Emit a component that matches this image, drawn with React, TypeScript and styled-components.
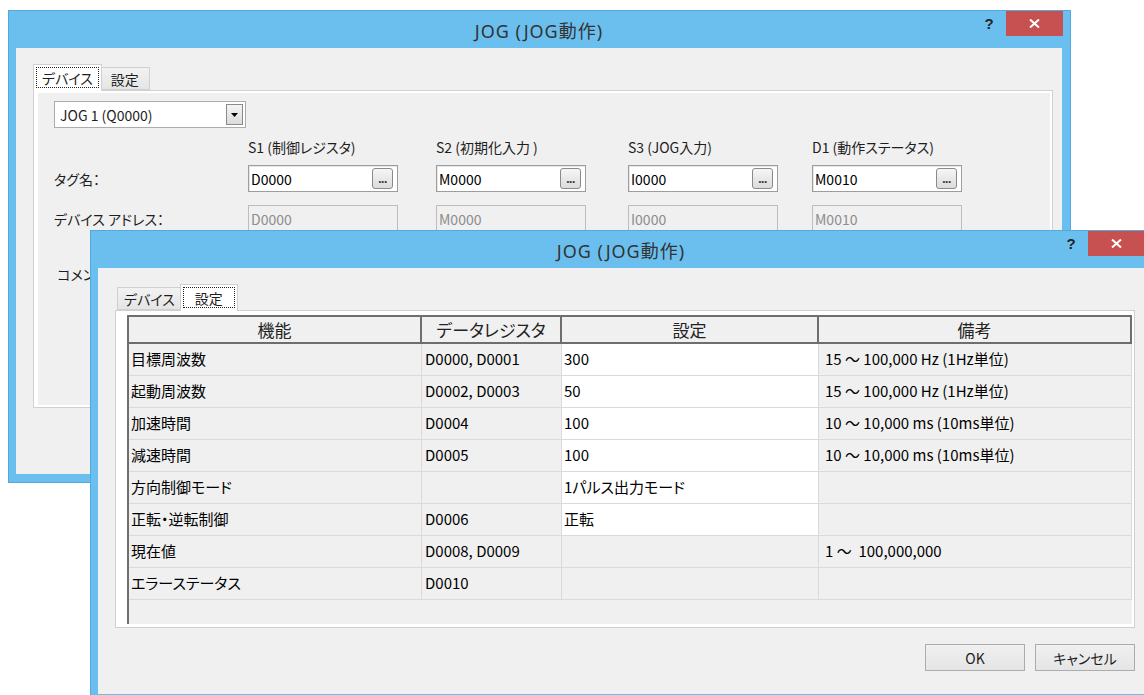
import { Fragment } from "react"
import styled, { createGlobalStyle } from "styled-components"

const GlobalStyle = createGlobalStyle`
    html, body {
        margin: 0;
        padding: 0;
        background: #fff;
    }
    body {
        font-family: "Noto Sans CJK JP", "Noto Sans", sans-serif;
        font-feature-settings: "palt";
        color: #1e1e1e;
    }
`

const Desktop = styled.div`
    position: relative;
    width: 1144px;
    height: 695px;
    overflow: hidden;
    background: #fff;
`

const Window = styled.div<{ $x: number; $y: number }>`
    position: absolute;
    left: ${(p) => p.$x}px;
    top: ${(p) => p.$y}px;
    width: 1063px;
    height: 473px;
    box-sizing: border-box;
    padding: 0 8px 8px 7px;
    background: #6bbfee;
    border: 1px solid #55a8de;
    display: flex;
    flex-direction: column;
`

const TitleBar = styled.div`
    height: 37px;
    display: grid;
    grid-template-columns: 1fr auto 1fr;
    align-items: center;
`

const Title = styled.div`
    grid-column: 2;
    font-family: "Noto Sans", "Noto Sans CJK JP", sans-serif;
    font-size: 18px;
    letter-spacing: 1px;
    color: #333;
`

const Controls = styled.div`
    grid-column: 3;
    justify-self: end;
    align-self: start;
    display: flex;
    margin-right: -1px;
`

const HelpButton = styled.div`
    width: 28px;
    height: 25px;
    margin-right: 3px;
    display: flex;
    align-items: center;
    justify-content: center;
    font-family: "Liberation Sans", sans-serif;
    font-weight: bold;
    font-size: 15px;
    color: #222;
`

const CloseButton = styled.div`
    width: 57px;
    height: 25px;
    background: #c75050;
    display: flex;
    align-items: center;
    justify-content: center;
`

const Client = styled.div`
    flex: 1;
    background: #f0f0f0;
    display: flex;
    flex-direction: column;
    padding: 16px 9px 0 17px;
`

const TabStrip = styled.div`
    display: flex;
    align-items: flex-end;
    height: 27px;
    padding-left: 2px;
    margin-bottom: -1px;
    position: relative;
    z-index: 1;
`

const Tab = styled.div<{ $active?: boolean }>`
    box-sizing: border-box;
    min-width: ${(p) => (p.$active ? 58 : 50)}px;
    height: ${(p) => (p.$active ? 27 : 23)}px;
    margin: ${(p) => (p.$active ? "0 -2px" : "0 0 1px 0")};
    padding: ${(p) => (p.$active ? "2px 2px 3px" : "0 6px")};
    border: 1px solid #d0d0d0;
    border-bottom: ${(p) => (p.$active ? "none" : "1px solid #d0d0d0")};
    background: ${(p) => (p.$active ? "#fff" : "linear-gradient(#f2f2f2, #e5e5e5)")};
    position: relative;
    z-index: ${(p) => (p.$active ? 2 : 1)};
    display: flex;
    align-items: center;
    justify-content: center;
    font-size: 14px;
    color: #1e1e1e;
`

const FocusRect = styled.span`
    flex: 1;
    align-self: stretch;
    display: flex;
    align-items: center;
    justify-content: center;
    padding: 0 5px;
    border: 1px dotted #222;
`

const Pane = styled.div`
    height: 318px;
    box-sizing: border-box;
    border: 1px solid #d0d0d0;
    background: #fff;
    padding: 2px 2px 2px 4px;
    display: flex;
`

const Page = styled.div<{ $white?: boolean }>`
    flex: 1;
    background: ${(p) => (p.$white ? "#fff" : "#f0f0f0")};
    display: flex;
    flex-direction: column;
`

const DevicePage = styled(Page)`
    padding: 8px 0 0 16px;
`

const TablePage = styled(Page)`
    padding: 2px 0 1px 7px;
`

const Combo = styled.div`
    box-sizing: border-box;
    width: 192px;
    height: 27px;
    border: 1px solid #acacac;
    background: #fff;
    display: flex;
    align-items: center;
    padding-left: 5px;
    font-size: 14px;
    color: #1e1e1e;
`

const DropButton = styled.div`
    box-sizing: border-box;
    margin-left: auto;
    margin-right: 2px;
    width: 17px;
    height: 21px;
    border: 1px solid #8a8a8a;
    background: linear-gradient(#f4f4f4, #dcdcdc);
    display: flex;
    align-items: center;
    justify-content: center;
`

const FieldRow = styled.div<{ $gap: number }>`
    display: grid;
    grid-template-columns: 194px 188px 192px 184px 150px;
    align-items: center;
    margin-top: ${(p) => p.$gap}px;
`

const Label = styled.div`
    font-size: 14px;
    line-height: 20px;
    color: #1e1e1e;
    white-space: nowrap;
`

const TextBox = styled.div<{ $disabled?: boolean }>`
    box-sizing: border-box;
    width: 150px;
    height: 27px;
    border: 1px solid ${(p) => (p.$disabled ? "#bcbcbc" : "#9d9d9d")};
    background: ${(p) => (p.$disabled ? "#f0f0f0" : "#fff")};
    box-shadow: ${(p) => (p.$disabled ? "none" : "inset 1px 1px 0 #e6e6e6")};
    display: flex;
    align-items: center;
    padding-left: 2px;
    font-size: 14px;
    color: ${(p) => (p.$disabled ? "#8c8c8c" : "#000")};
`

const TextArea = styled(TextBox)`
    height: 58px;
`

const BrowseButton = styled.div`
    box-sizing: border-box;
    margin-left: auto;
    margin-right: 4px;
    width: 21px;
    height: 21px;
    border: 1px solid #8a8a8a;
    border-radius: 3px;
    background: linear-gradient(#f6f6f6, #dcdcdc);
    display: flex;
    align-items: flex-end;
    justify-content: center;
    padding-bottom: 3px;
    font-family: "Liberation Sans", sans-serif;
    font-size: 12px;
    font-weight: bold;
    line-height: 12px;
    letter-spacing: -0.5px;
    color: #333;
`

const ButtonRow = styled.div`
    display: flex;
    justify-content: flex-end;
    gap: 10px;
    margin-top: 16px;
`

const PushButton = styled.div`
    box-sizing: border-box;
    width: 100px;
    height: 27px;
    border: 1px solid #acacac;
    background: linear-gradient(#f0f0f0, #e5e5e5);
    display: flex;
    align-items: center;
    justify-content: center;
    font-size: 14px;
    color: #1e1e1e;
`

const Grid = styled.div`
    flex: 1;
    display: grid;
    grid-template-columns: 293px 140px 257px 1fr;
    grid-auto-rows: 32px;
    grid-template-rows: 27px;
    align-content: start;
    border-top: 2px solid #6e6e6e;
    border-left: 2px solid #6e6e6e;
    background: #f0f0f0;
`

const HeadCell = styled.div`
    box-sizing: border-box;
    border-right: 2px solid #6e6e6e;
    border-bottom: 2px solid #6e6e6e;
    display: flex;
    align-items: center;
    justify-content: center;
    font-size: 17px;
    color: #222;
`

const Cell = styled.div<{ $white?: boolean; $pad?: number }>`
    box-sizing: border-box;
    border-right: 1px solid #dadada;
    border-bottom: 1px solid #dadada;
    background: ${(p) => (p.$white ? "#fff" : "transparent")};
    display: flex;
    align-items: center;
    padding: 0 0 3px ${(p) => p.$pad ?? 2}px;
    font-size: 15px;
    color: #000;
    white-space: pre;
`

const columns = [
    { key: "name", title: "機能" },
    { key: "reg", title: "データレジスタ" },
    { key: "value", title: "設定" },
    { key: "note", title: "備考" },
]

const rows = [
    { name: "目標周波数", reg: "D0000, D0001", value: "300", note: "15 ～ 100,000 Hz (1Hz単位)", editable: true },
    { name: "起動周波数", reg: "D0002, D0003", value: "50", note: "15 ～ 100,000 Hz (1Hz単位)", editable: true },
    { name: "加速時間", reg: "D0004", value: "100", note: "10 ～ 10,000 ms (10ms単位)", editable: true },
    { name: "減速時間", reg: "D0005", value: "100", note: "10 ～ 10,000 ms (10ms単位)", editable: true },
    { name: "方向制御モード", reg: "", value: "1パルス出力モード", note: "", editable: true },
    { name: "正転・逆転制御", reg: "D0006", value: "正転", note: "", editable: true },
    { name: "現在値", reg: "D0008, D0009", value: "", note: "1 ～  100,000,000", editable: false },
    { name: "エラーステータス", reg: "D0010", value: "", note: "", editable: false },
]

const devices = [
    { label: "S1 (制御レジスタ)", tag: "D0000" },
    { label: "S2 (初期化入力 )", tag: "M0000" },
    { label: "S3 (JOG入力)", tag: "I0000" },
    { label: "D1 (動作ステータス)", tag: "M0010" },
]

function TitleBarView() {
    return (
        <TitleBar>
            <Title>JOG (JOG動作)</Title>
            <Controls>
                <HelpButton>?</HelpButton>
                <CloseButton>
                    <svg width="11" height="9" viewBox="0 0 11 9">
                        <path d="M1 0.5 L10 8.5 M10 0.5 L1 8.5" stroke="#fff" strokeWidth="2" />
                    </svg>
                </CloseButton>
            </Controls>
        </TitleBar>
    )
}

function DeviceTab() {
    return (
        <DevicePage>
            <Combo>
                JOG 1 (Q0000)
                <DropButton>
                    <svg width="7" height="4" viewBox="0 0 7 4">
                        <path d="M0 0 L7 0 L3.5 4 Z" fill="#000" />
                    </svg>
                </DropButton>
            </Combo>
            <FieldRow $gap={9}>
                <span />
                {devices.map((d) => (
                    <Label key={d.label}>{d.label}</Label>
                ))}
            </FieldRow>
            <FieldRow $gap={8}>
                <Label>タグ名：</Label>
                {devices.map((d) => (
                    <TextBox key={d.label}>
                        {d.tag}
                        <BrowseButton>...</BrowseButton>
                    </TextBox>
                ))}
            </FieldRow>
            <FieldRow $gap={13}>
                <Label>デバイス アドレス：</Label>
                {devices.map((d) => (
                    <TextBox key={d.label} $disabled>
                        {d.tag}
                    </TextBox>
                ))}
            </FieldRow>
            <FieldRow $gap={13}>
                <Label>&nbsp;コメント：</Label>
                {devices.map((d) => (
                    <TextArea key={d.label} />
                ))}
            </FieldRow>
        </DevicePage>
    )
}

function SettingTab() {
    return (
        <TablePage $white>
            <Grid>
                {columns.map((c) => (
                    <HeadCell key={c.key}>{c.title}</HeadCell>
                ))}
                {rows.map((r) => (
                    <Fragment key={r.name}>
                        <Cell>{r.name}</Cell>
                        <Cell $pad={3}>{r.reg}</Cell>
                        <Cell $white={r.editable}>{r.value}</Cell>
                        <Cell $pad={6}>{r.note}</Cell>
                    </Fragment>
                ))}
            </Grid>
        </TablePage>
    )
}

export default function App() {
    return (
        <Desktop>
            <GlobalStyle />
            <Window $x={8} $y={10}>
                <TitleBarView />
                <Client>
                    <TabStrip>
                        <Tab $active>
                            <FocusRect>デバイス</FocusRect>
                        </Tab>
                        <Tab>設定</Tab>
                    </TabStrip>
                    <Pane>
                        <DeviceTab />
                    </Pane>
                </Client>
            </Window>
            <Window $x={90} $y={230}>
                <TitleBarView />
                <Client>
                    <TabStrip>
                        <Tab>デバイス</Tab>
                        <Tab $active>
                            <FocusRect>設定</FocusRect>
                        </Tab>
                    </TabStrip>
                    <Pane>
                        <SettingTab />
                    </Pane>
                    <ButtonRow>
                        <PushButton>OK</PushButton>
                        <PushButton>キャンセル</PushButton>
                    </ButtonRow>
                </Client>
            </Window>
        </Desktop>
    )
}
